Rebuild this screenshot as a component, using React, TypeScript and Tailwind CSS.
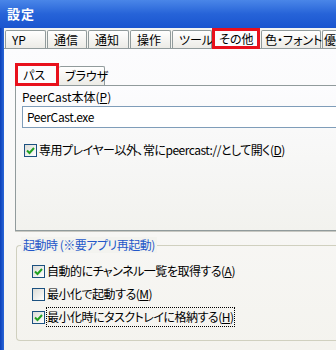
import React from "react";

const font = { fontFamily: '"Noto Sans CJK JP", "Noto Sans", sans-serif' };

const Check = ({ checked }: { checked: boolean }) => (
  <div className="w-[13px] h-[13px] border border-[#1c5180] bg-gradient-to-br from-[#dcdcd7] to-white flex items-center justify-center shrink-0">
    {checked && (
      <svg width="9" height="9" viewBox="0 0 9 9">
        <path d="M1 4.5 L3.5 7 L8 2" stroke="#21a121" strokeWidth="2" fill="none" />
      </svg>
    )}
  </div>
);

const RedBox = () => (
  <div className="absolute -inset-[1px] border-[3px] border-[#e8101c] pointer-events-none" />
);

const topTabs = [
  { label: "YP", w: "w-[41px]" },
  { label: "通信", w: "w-[40px]" },
  { label: "通知", w: "w-[41px]" },
  { label: "操作", w: "w-[41px]" },
  { label: "ツール", w: "w-[40px]" },
];

const App = () => {
  return (
    <div
      className="w-[336px] h-[350px] overflow-hidden flex flex-col bg-[#f1f1ec] text-[12px] text-black [font-feature-settings:'palt']"
      style={font}
    >
      {/* タイトルバー */}
      <div className="h-[28px] shrink-0 bg-gradient-to-b from-[#4a86e8] via-[#2663d8] to-[#1a55cf] flex items-center pl-[7px]">
        <span className="text-white font-bold text-[13px] tracking-[1px]">設定</span>
      </div>

      <div className="flex flex-1 min-h-0">
        <div className="w-[4px] shrink-0 bg-gradient-to-r from-[#0b3fb8] to-[#2a66d8]" />

        <div className="flex-1 flex flex-col min-w-0">
          {/* 上タブ */}
          <div className="h-[20px] shrink-0 flex items-end pl-[1px] bg-[#f5f5f1] whitespace-nowrap">
            {topTabs.map((t) => (
              <div
                key={t.label}
                className={`${t.w} h-[18px] mr-[1px] shrink-0 border border-b-0 border-[#919b9c] rounded-t-[2px] bg-gradient-to-b from-white to-[#ecebe6] pl-[6px] leading-[17px]`}
              >
                {t.label}
              </div>
            ))}
            <div className="relative w-[48px] h-[20px] -ml-[1px] mr-[1px] shrink-0 border border-b-0 border-[#919b9c] bg-[#fcfcfe] pl-[6px] leading-[19px] z-10">
              その他
              <RedBox />
            </div>
            <div className="w-[60px] h-[18px] mr-[1px] shrink-0 border border-b-0 border-[#919b9c] rounded-t-[2px] bg-gradient-to-b from-white to-[#ecebe6] pl-[3px] leading-[17px]">
              色・フォント
            </div>
            <div className="w-[14px] h-[18px] shrink-0 border border-b-0 border-r-0 border-[#919b9c] rounded-tl-[2px] bg-gradient-to-b from-white to-[#ecebe6] pl-[1px] leading-[17px]">
              優
            </div>
          </div>

          {/* タブ内容 */}
          <div className="flex-1 border-t border-[#919b9c] bg-gradient-to-b from-[#fcfcfe] to-[#f4f3ee] pl-[11px] pt-[14px]">
            {/* 内側タブ */}
            <div className="h-[22px] flex items-end whitespace-nowrap">
              <div className="relative w-[44px] h-[22px] border border-b-0 border-[#919b9c] bg-[#fcfcfe] pl-[7px] leading-[21px] z-10">
                パス
                <RedBox />
              </div>
              <div className="w-[46px] h-[19px] border border-b-0 border-l-0 border-[#919b9c] rounded-t-[2px] bg-gradient-to-b from-white to-[#ecebe6] pl-[6px] leading-[18px]">
                ブラウザ
              </div>
            </div>
            <div className="h-[146px] border border-r-0 border-[#919b9c] shadow-[0_1px_0_#c8c8c2] bg-gradient-to-b from-[#fcfcfe] to-[#f2f2ee] pl-[6px] pt-[3px]">
              <div className="h-[16px] leading-[16px]">
                PeerCast本体(<span className="underline">P</span>)
              </div>
              <div className="mt-[1px] h-[22px] border border-r-0 border-[#7f9db9] bg-white pl-[4px] leading-[20px] tracking-[-0.4px]">
                PeerCast.exe
              </div>
              <div className="mt-[13px] flex items-center gap-[2px] pl-[2px] tracking-[-0.5px]">
                <Check checked />
                <span>
                  専用プレイヤー以外、常にpeercast://として開く(<span className="underline">D</span>)
                </span>
              </div>
            </div>

            {/* グループボックス */}
            <div className="mt-[14px] ml-[1px] h-[96px] border border-r-0 border-[#d0d0bf] rounded-l-[4px] pl-[15px] relative">
              <div className="absolute -top-[9px] left-[4px] px-[2px] bg-[#f3f3ef] text-[#2357c9] leading-[16px] tracking-[-0.5px]">
                起動時 (※要アプリ再起動)
              </div>
              <div className="flex flex-col gap-[9px] pt-[18px] tracking-[-0.5px]">
                <div className="flex items-center gap-[2px] h-[14px]">
                  <Check checked />
                  <span>
                    自動的にチャンネル一覧を取得する(<span className="underline">A</span>)
                  </span>
                </div>
                <div className="flex items-center gap-[2px] h-[14px]">
                  <Check checked={false} />
                  <span>
                    最小化で起動する(<span className="underline">M</span>)
                  </span>
                </div>
                <div className="flex items-center gap-[2px] h-[14px]">
                  <Check checked />
                  <span className="outline outline-1 outline-dotted outline-black">
                    最小化時にタスクトレイに格納する(<span className="underline">H</span>)
                  </span>
                </div>
              </div>
            </div>
          </div>
        </div>
      </div>
    </div>
  );
};

export default App;
